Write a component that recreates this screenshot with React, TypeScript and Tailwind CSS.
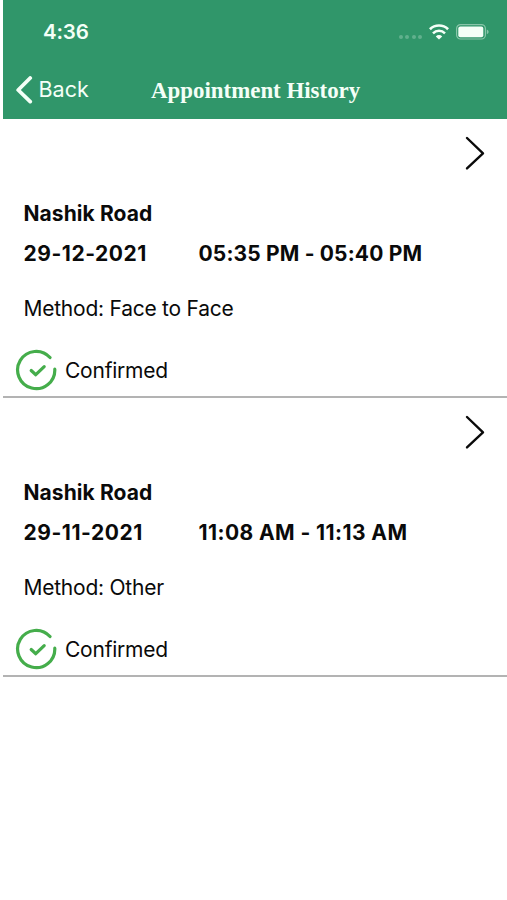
interface Appointment {
  id: number;
  clinic: string;
  date: string;
  time: string;
  timeClass: string;
  method: string;
  status: string;
}

const appointments: Appointment[] = [
  {
    id: 1,
    clinic: 'Nashik Road',
    date: '29-12-2021',
    time: '05:35 PM - 05:40 PM',
    timeClass: 'tracking-[0.16px]',
    method: 'Face to Face',
    status: 'Confirmed',
  },
  {
    id: 2,
    clinic: 'Nashik Road',
    date: '29-11-2021',
    time: '11:08 AM - 11:13 AM',
    timeClass: 'tracking-[0.42px]',
    method: 'Other',
    status: 'Confirmed',
  },
];

function WifiIcon() {
  return (
    <svg width="20" height="16" viewBox="0 0 20 16" fill="none" stroke="currentColor" strokeWidth="2.7">
      <path d="M0.9 5.2a13 13 0 0 1 18.2 0" />
      <path d="M4 9.3a8.6 8.6 0 0 1 12 0" strokeWidth="2.5" />
      <path d="M10 15.6l-3.2-3.2a4.5 4.5 0 0 1 6.4 0z" fill="currentColor" stroke="none" />
    </svg>
  );
}

function BatteryIcon() {
  return (
    <svg width="34" height="16" viewBox="0 0 34 16" fill="none">
      <rect x="0.6" y="0.6" width="28.8" height="14.4" rx="4" stroke="currentColor" strokeOpacity="0.45" strokeWidth="1.2" />
      <rect x="2.3" y="2.4" width="25" height="10.8" rx="2" fill="currentColor" />
      <path d="M30.8 5.4c2.4 1 2.4 3.8 0 4.8z" fill="currentColor" fillOpacity="0.45" />
    </svg>
  );
}

function ConfirmedIcon() {
  return (
    <svg
      width="42"
      height="42"
      viewBox="0 0 42 42"
      fill="none"
      stroke="#45ad4b"
      strokeWidth="3.2"
      strokeLinecap="round"
      strokeLinejoin="round"
    >
      <path d="M35 8.5A18.6 18.6 0 1 0 39.8 20.2" />
      <path d="M16.2 21.5l4.6 4.2 8.4-8" />
    </svg>
  );
}

function Header() {
  return (
    <header className="h-[119px] bg-[#30966a] text-[#f4fff7]">
      {/* Status bar */}
      <div className="flex h-16 items-center justify-between pl-10 pr-[17px]">
        <span className="text-[20.5px] font-semibold leading-6 tracking-[-0.2px]">4:36</span>
        <div className="flex items-center">
          <div className="mr-[7px] mt-[10px] flex gap-[2.4px] opacity-25">
            {[...Array(4)].map((_, i) => (
              <span key={i} className="h-[4px] w-[4px] rounded-full bg-current" />
            ))}
          </div>
          <WifiIcon />
          <div className="ml-[7px]">
            <BatteryIcon />
          </div>
        </div>
      </div>

      {/* Navigation bar */}
      <div className="flex h-[52px] items-center pl-[13px]">
        <button className="flex items-center">
          <svg width="17" height="28" viewBox="0 0 17 28" fill="none" stroke="currentColor" strokeWidth="3.8" strokeLinecap="round" strokeLinejoin="round">
            <path d="M14.2 2L2.2 14l12 11.6" />
          </svg>
          <span className="-mt-[2px] ml-[5.5px] w-[52px] whitespace-nowrap text-left text-[21.5px] leading-7">Back</span>
        </button>
        <h1 className="ml-[60.5px] mt-px whitespace-nowrap font-['Liberation_Serif',serif] text-[22.9px] font-bold leading-7">
          Appointment History
        </h1>
      </div>
    </header>
  );
}

function AppointmentRow({ appointment }: { appointment: Appointment }) {
  return (
    <li className="flex h-[279px] flex-col border-b-2 border-[#b3b3b3]">
      <div className="flex h-[68px] justify-end pr-[21.5px] pt-[16px]">
        <svg width="22" height="36" viewBox="0 0 22 36" fill="none" stroke="currentColor" strokeWidth="2.4" strokeLinecap="round" strokeLinejoin="round">
          <path d="M3 3l16 15.3L3 33.4" />
        </svg>
      </div>
      <div className="pl-[20.5px] text-[21px] leading-7">
        <p className="mt-[12.5px] font-bold tracking-[0.08px]">{appointment.clinic}</p>
        <div className="mt-[12.5px] flex font-bold">
          <span className="w-[175px] tracking-[0.54px]">{appointment.date}</span>
          <span className={appointment.timeClass}>{appointment.time}</span>
        </div>
        <p className="mt-[27px] tracking-[-0.24px]">Method: {appointment.method}</p>
      </div>
      <div className="mt-[26px] flex items-center pl-3">
        <ConfirmedIcon />
        <span className="ml-[8px] mt-[2px] text-[21px] leading-7 tracking-[-0.22px]">{appointment.status}</span>
      </div>
    </li>
  );
}

export default function App() {
  return (
    <div className="h-[900px] w-[507px] overflow-hidden bg-white pl-[3px] font-['Inter',sans-serif] text-[#0a0a0a]">
      <Header />
      <ul>
        {appointments.map((appointment) => (
          <AppointmentRow key={appointment.id} appointment={appointment} />
        ))}
      </ul>
    </div>
  );
}
